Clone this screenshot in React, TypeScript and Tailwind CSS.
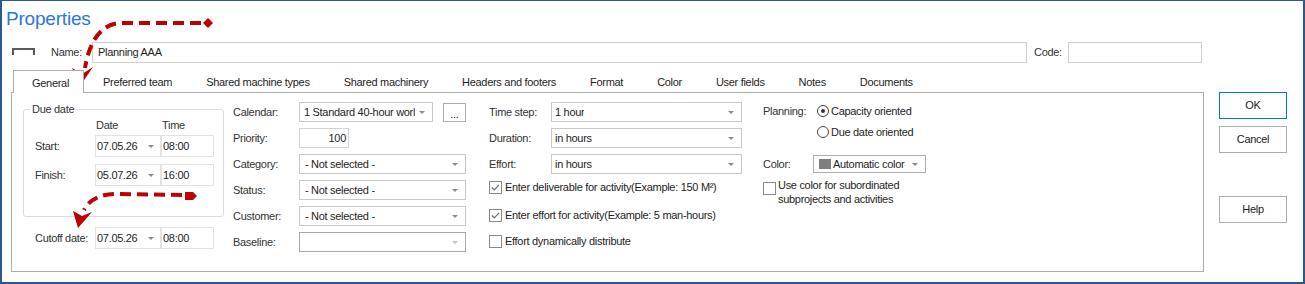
import type { ReactNode } from 'react';

const tabs = [
  'Preferred team',
  'Shared machine types',
  'Shared machinery',
  'Headers and footers',
  'Format',
  'Color',
  'User fields',
  'Notes',
  'Documents',
];

function Caret({ light }: { light?: boolean }) {
  return (
    <svg width="6" height="3" viewBox="0 0 6 3" className="shrink-0">
      <path d="M0 0h6L3 3z" fill={light ? '#c4c4c4' : '#8c8c8c'} />
    </svg>
  );
}

function Select({ w, children, pl = 'pl-[5px]', border = 'border-[#c8c8c8]', light }: { w: string; children?: ReactNode; pl?: string; border?: string; light?: boolean }) {
  return (
    <div className={`flex h-[20px] items-center justify-between overflow-hidden border ${border} ${w} ${pl} pr-[7px]`}>
      <span className="overflow-hidden whitespace-nowrap">{children}</span>
      <Caret light={light} />
    </div>
  );
}

function Row({ label, lw, children }: { label: string; lw: string; children: ReactNode }) {
  return (
    <div className="flex h-[20px] items-center">
      <span className={`${lw} text-[#333]`}>{label}</span>
      {children}
    </div>
  );
}

function Check({ checked }: { checked?: boolean }) {
  return (
    <span className="flex h-[13px] w-[13px] shrink-0 items-center justify-center border border-[#8a8a8a] bg-white">
      {checked && (
        <svg width="11" height="11" viewBox="0 0 11 11">
          <path d="M2 5.5l2.3 2.4L9 2.8" fill="none" stroke="#6a6a6a" strokeWidth="1.2" />
        </svg>
      )}
    </span>
  );
}

function Radio({ on }: { on?: boolean }) {
  return (
    <span className="flex h-[12px] w-[12px] shrink-0 items-center justify-center rounded-full border border-[#444]">
      {on && <span className="h-[4px] w-[4px] rounded-full bg-[#333]" />}
    </span>
  );
}

function DateTime({ date, time }: { date: string; time: string }) {
  return (
    <>
      <div className="flex h-[22px] w-[66px] items-center justify-between border border-[#e2e2e2] pl-[1px] pr-[6px]">
        {date}
        <Caret />
      </div>
      <div className="flex h-[22px] w-[53px] items-center border border-[#e2e2e2] pl-[1px]">{time}</div>
    </>
  );
}

function Button({ children, primary }: { children: ReactNode; primary?: boolean }) {
  return (
    <div
      className={`flex h-[27px] w-[68px] items-center justify-center border bg-white text-[#222] ${
        primary ? 'border-[#0078d7]' : 'border-[#adadad]'
      }`}
    >
      {children}
    </div>
  );
}

export default function App() {
  return (
    <div className="relative h-[284px] w-[1305px] overflow-hidden border-x-2 border-b-2 border-t border-[#2b5797] bg-white font-['Liberation_Sans',Arial,sans-serif] text-[11px] tracking-[-0.3px] text-[#1e1e1e]">
      <div className="pl-[4px] pt-[7px] text-[19px] leading-[22px] tracking-[-0.2px] text-[#2a78d8]">Properties</div>

      {/* name row */}
      <div className="mt-[12px] flex h-[21px] items-center pl-[10px]">
        <div className="mt-[6px] h-[7px] w-[23px] self-start border-x-2 border-t-2 border-[#5a5a5a]" />
        <span className="ml-[16px] w-[41px] text-[#333]">Name:</span>
        <div className="h-[21px] w-[935px] border border-[#cfcfcf] pl-[5px] leading-[19px]">Planning AAA</div>
        <span className="ml-[7px] w-[34px] text-[#333]">Code:</span>
        <div className="h-[21px] w-[134px] border border-[#cfcfcf]" />
      </div>

      <div className="mt-[7px] flex">
        <div className="ml-[9px] w-[1193px]">
          {/* tabs */}
          <div className="flex h-[22px] pl-[2px]">
            <div className="relative z-10 h-[23px] w-[71px] border-x border-t border-[#adadad] bg-white pl-[18px] leading-[24px]">
              General
            </div>
            <div className="ml-[19px] flex gap-[34px] leading-[24px]">
              {tabs.map((t) => (
                <span key={t} className="whitespace-nowrap">
                  {t}
                </span>
              ))}
            </div>
          </div>

          {/* panel */}
          <div className="flex h-[180px] border border-[#adadad]">
            {/* due date column */}
            <div className="ml-[11px] w-[201px]">
              <fieldset className="mt-[9px] h-[115px] rounded-[3px] border border-[#dcdcdc]">
                <legend className="ml-[6px] px-[2px] leading-[14px] text-[#333]">Due date</legend>
                <div className="pl-[11px]">
                  <div className="mt-[2px] flex h-[14px] leading-[14px] text-[#333]">
                    <span className="w-[60px]" />
                    <span className="w-[66px] pl-[1px]">Date</span>
                    <span className="pl-[1px]">Time</span>
                  </div>
                  <div className="mt-[3px] flex h-[22px] items-center">
                    <span className="w-[60px] pt-[1px] text-[#333]">Start:</span>
                    <DateTime date="07.05.26" time="08:00" />
                  </div>
                  <div className="mt-[7px] flex h-[22px] items-center">
                    <span className="w-[60px] pt-[1px] text-[#333]">Finish:</span>
                    <DateTime date="05.07.26" time="16:00" />
                  </div>
                </div>
              </fieldset>
              <div className="mt-[10px] flex h-[22px] items-center pl-[12px]">
                <span className="w-[60px] pt-[1px] text-[#333]">Cutoff date:</span>
                <DateTime date="07.05.26" time="08:00" />
              </div>
            </div>

            {/* calendar column */}
            <div className="ml-[9px] flex flex-col gap-[6px] pt-[9px]">
              <Row label="Calendar:" lw="w-[66px]">
                <Select w="w-[134px]" pl="pl-[4px]">1 Standard 40-hour worl</Select>
                <div className="ml-[10px] flex h-[19px] w-[23px] items-end justify-center border border-[#adadad] pb-[2px] leading-[10px]">
                  ...
                </div>
              </Row>
              <Row label="Priority:" lw="w-[66px]">
                <div className="flex h-[20px] w-[50px] items-center justify-end border border-[#d4d4d4] pr-[2px]">100</div>
              </Row>
              <Row label="Category:" lw="w-[66px]">
                <Select w="w-[167px]">- Not selected -</Select>
              </Row>
              <Row label="Status:" lw="w-[66px]">
                <Select w="w-[167px]">- Not selected -</Select>
              </Row>
              <Row label="Customer:" lw="w-[66px]">
                <Select w="w-[167px]">- Not selected -</Select>
              </Row>
              <Row label="Baseline:" lw="w-[66px]">
                <Select w="w-[167px]" border="border-[#a8a8a8]" light />
              </Row>
            </div>

            {/* time step column */}
            <div className="ml-[23px] flex flex-col pt-[9px]">
              <div className="flex flex-col gap-[6px]">
                <Row label="Time step:" lw="w-[62px]">
                  <Select w="w-[191px]" pl="pl-[3px]">1 hour</Select>
                </Row>
                <Row label="Duration:" lw="w-[62px]">
                  <Select w="w-[191px]" pl="pl-[3px]">in hours</Select>
                </Row>
                <Row label="Effort:" lw="w-[62px]">
                  <Select w="w-[191px]" pl="pl-[3px]">in hours</Select>
                </Row>
              </div>
              <div className="mt-[7px] flex h-[13px] items-center gap-[3px] leading-[13px]">
                <Check checked />
                <span>Enter deliverable for activity(Example: 150 M²)</span>
              </div>
              <div className="mt-[15px] flex h-[13px] items-center gap-[3px] leading-[13px]">
                <Check checked />
                <span>Enter effort for activity(Example: 5 man-hours)</span>
              </div>
              <div className="mt-[13px] flex h-[13px] items-center gap-[3px] leading-[13px]">
                <Check />
                <span>Effort dynamically distribute</span>
              </div>
            </div>

            {/* planning column */}
            <div className="ml-[21px] flex flex-col pt-[8px]">
              <div className="flex h-[20px] items-center">
                <span className="w-[54px] text-[#333]">Planning:</span>
                <Radio on />
                <span className="ml-[2px]">Capacity oriented</span>
              </div>
              <div className="mt-[1px] flex h-[20px] items-center pl-[54px]">
                <Radio />
                <span className="ml-[2px]">Due date oriented</span>
              </div>
              <div className="mt-[13px] flex h-[18px] items-center">
                <span className="w-[50px] text-[#333]">Color:</span>
                <div className="flex h-[18px] w-[113px] items-center border border-[#adadad] pl-[5px] pr-[7px]">
                  <span className="h-[10px] w-[12px] bg-[#7f7f7f]" />
                  <span className="ml-[2px] flex-1">Automatic color</span>
                  <Caret />
                </div>
              </div>
              <div className="mt-[5px] flex items-start gap-[2px]">
                <span className="mt-[4px]">
                  <Check />
                </span>
                <span className="leading-[14px]">
                  Use color for subordinated
                  <br />
                  subprojects and activities
                </span>
              </div>
            </div>
          </div>
        </div>

        {/* buttons */}
        <div className="ml-[15px] mt-[22px] flex flex-col">
          <Button primary>OK</Button>
          <div className="mt-[7px]">
            <Button>Cancel</Button>
          </div>
          <div className="mt-[43px]">
            <Button>Help</Button>
          </div>
        </div>
      </div>

      {/* annotation arrows */}
      <svg className="pointer-events-none absolute left-[-2px] top-[-1px]" width="1305" height="284" viewBox="0 0 1305 284">
        <g fill="#c00000">
          <path d="M201 23 L122 23 C103 23 90 38 85 68" fill="none" stroke="#c00000" strokeWidth="4" strokeDasharray="11 6" />
          <polygon points="208,18 213,23 208,28 203,23" />
          <polygon points="72,68 82,74 93,67 80,86" />
          <path d="M182 195 L115 194 C100 194 89 200 84 210" fill="none" stroke="#c00000" strokeWidth="4" strokeDasharray="11 6" />
          <polygon points="185,192 193,192 197,196 193,200 185,200" />
          <polygon points="73,211 82,216 92,212 78,228" />
        </g>
      </svg>
    </div>
  );
}
